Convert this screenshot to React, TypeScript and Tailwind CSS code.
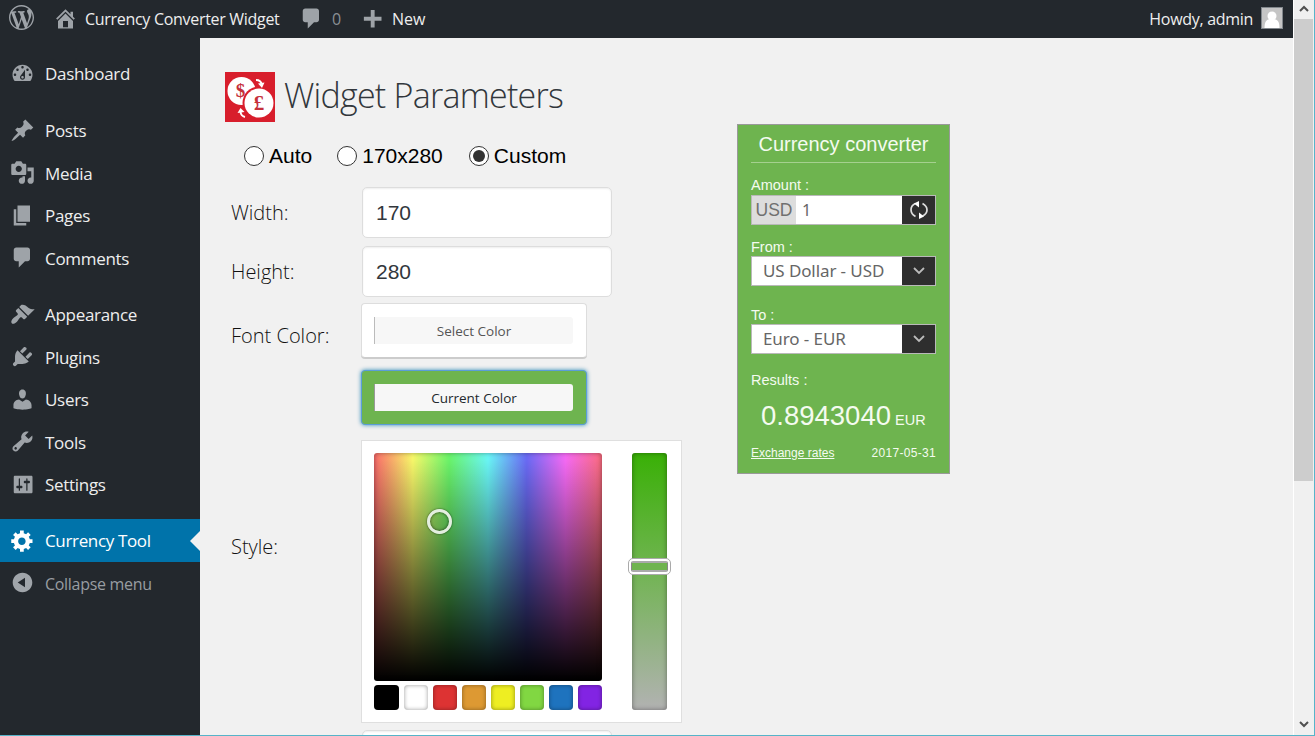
import React from "react";

const paths = {
  wordpress:
    "M20 10c0-5.51-4.49-10-10-10C4.48 0 0 4.49 0 10c0 5.52 4.48 10 10 10 5.51 0 10-4.48 10-10zM7.78 15.37L4.37 6.22c.55-.02 1.17-.08 1.17-.08.5-.06.44-1.13-.06-1.11 0 0-1.45.11-2.37.11-.18 0-.37 0-.58-.01C4.12 2.69 6.87 1.11 10 1.11c2.33 0 4.45.87 6.05 2.34-.68-.11-1.65.39-1.65 1.58 0 .74.45 1.36.9 2.1.35.61.55 1.36.55 2.46 0 1.49-1.4 5-1.4 5l-3.03-8.37c.54-.02.82-.17.82-.17.5-.05.44-1.25-.06-1.22 0 0-1.44.12-2.38.12-.87 0-2.33-.12-2.33-.12-.5-.03-.56 1.2-.06 1.22l.92.08 1.26 3.41zM17.41 10c.24-.64.74-1.87.43-4.25.7 1.29 1.05 2.71 1.05 4.25 0 3.29-1.73 6.24-4.4 7.78.97-2.59 1.94-5.2 2.92-7.78zM6.1 18.09C3.12 16.65 1.11 13.53 1.11 10c0-1.3.23-2.48.72-3.59C3.25 10.3 4.67 14.2 6.1 18.09zm4.03-6.63l2.58 6.98c-.86.29-1.76.45-2.71.45-.79 0-1.57-.11-2.29-.33.81-2.38 1.62-4.74 2.42-7.1z",
  home: "M16 8.5l1.53 1.53-1.06 1.06L10 4.6l-6.47 6.49-1.06-1.06L10 2.5l4 4v-2h2v4zm-6-2.46l6 5.99V18H4v-5.97zM12 17v-5H8v5h4z",
  plus: "M17.200 8.600v3.100h-5.500v5.500H8.600v-5.500H3.100V8.600h5.500V3.100h3.100v5.500z",
  dashboard:
    "M3.76 16h12.48c1.1-1.37 1.76-3.11 1.76-5 0-4.42-3.58-8-8-8s-8 3.58-8 8c0 1.89.66 3.63 1.76 5zM10 4c.55 0 1 .45 1 1s-.45 1-1 1-1-.45-1-1 .45-1 1-1zM6 6c.55 0 1 .45 1 1s-.45 1-1 1-1-.45-1-1 .45-1 1-1zm8 0c.55 0 1 .45 1 1s-.45 1-1 1-1-.45-1-1 .45-1 1-1zm-5.37 5.55L12 7v6c0 1.1-.9 2-2 2s-2-.9-2-2c0-.57.24-1.08.63-1.45zM4 10c.55 0 1 .45 1 1s-.45 1-1 1-1-.45-1-1 .45-1 1-1zm12 0c.55 0 1 .45 1 1s-.45 1-1 1-1-.45-1-1 .45-1 1-1zm-5 3c0-.55-.45-1-1-1s-1 .45-1 1 .45 1 1 1 1-.45 1-1z",
  post: "M10.44 3.02l1.82-1.82 6.36 6.35-1.83 1.82c-1.05-.68-2.48-.57-3.41.36l-.75.75c-.92.93-1.04 2.35-.35 3.41l-1.83 1.82-2.41-2.41-2.8 2.79c-.42.42-3.38 2.71-3.8 2.29s1.86-3.39 2.28-3.81l2.79-2.79L4.1 9.36l1.83-1.82c1.05.69 2.48.57 3.4-.36l.75-.75c.93-.92 1.05-2.35.36-3.41z",
  media:
    "M13 11V4c0-.55-.45-1-1-1h-1.67L9 1H5L3.67 3H2c-.55 0-1 .45-1 1v7c0 .55.45 1 1 1h10c.55 0 1-.45 1-1zM7 4.500c1.380 0 2.500 1.120 2.500 2.500S8.380 9.500 7 9.500 4.500 8.380 4.500 7 5.620 4.500 7 4.500zM14 6h5v10.500c0 1.380-1.120 2.500-2.500 2.500S14 17.880 14 16.500s1.120-2.500 2.500-2.500c.17 0 .34.02.5.05V9h-3V6zm-4 8.050V13h2v3.500c0 1.380-1.120 2.500-2.500 2.500S7 17.880 7 16.500 8.120 14 9.500 14c.17 0 .34.02.5.05z",
  page: "M6 15V2h10v13H6zm-1 1h8v2H3V5h2v11z",
  comment: "M5 2h9c1.1 0 2 .9 2 2v7c0 1.1-.9 2-2 2h-2l-5 5v-5H5c-1.1 0-2-.9-2-2V4c0-1.1.9-2 2-2z",
  appearance:
    "M14.48 11.06L7.41 3.99l1.5-1.5c.5-.56 2.3-.47 3.51.32 1.21.8 1.43 1.28 2.91 2.1 1.18.64 2.45 1.26 4.45.85zm-.71.71L6.7 4.7 4.93 6.47c-.39.39-.39 1.02 0 1.41l1.06 1.06c.39.39.39 1.03 0 1.42-.6.6-1.43 1.11-2.21 1.69-.35.26-.7.53-1.01.84C1.43 14.23.4 16.08 1.4 17.07c.99 1 2.84-.03 4.18-1.36.31-.31.58-.66.85-1.02.57-.78 1.08-1.61 1.69-2.21.39-.39 1.02-.39 1.41 0l1.06 1.06c.39.39 1.02.39 1.41 0z",
  plugins:
    "M13.11 4.36L9.87 7.6 8 5.73l3.24-3.24c.35-.34 1.05-.2 1.56.32.52.51.66 1.21.31 1.55zm-8 1.77l.91-1.12 9.01 9.01-1.19.84c-.71.71-2.63 1.16-3.82 1.16H6.14L4.9 17.26c-.59.59-1.54.59-2.12 0-.59-.58-.59-1.53 0-2.12l1.24-1.24v-3.88c0-1.13.4-3.19 1.09-3.89zm7.26 3.97l3.24-3.24c.34-.35 1.04-.21 1.55.31.52.51.66 1.21.31 1.55l-3.24 3.25z",
  users:
    "M10 9.25c-2.27 0-2.73-3.44-2.73-3.44C7 4.02 7.82 2 9.97 2c2.16 0 2.98 2.02 2.71 3.81 0 0-.41 3.44-2.68 3.44zm0 2.57L12.72 10c2.39 0 4.52 2.33 4.52 4.53v2.49s-3.65 1.13-7.24 1.13c-3.65 0-7.24-1.13-7.24-1.13v-2.49c0-2.25 1.94-4.48 4.47-4.48z",
  tools:
    "M16.68 9.77c-1.34 1.34-3.3 1.67-4.95.99l-5.41 6.52c-.99.99-2.59.99-3.58 0s-.99-2.59 0-3.57l6.52-5.42c-.68-1.65-.35-3.61.99-4.95 1.28-1.28 3.12-1.62 4.72-1.06l-2.89 2.89 2.82 2.82 2.86-2.87c.53 1.58.18 3.39-1.08 4.65zM3.81 16.21c.4.39 1.04.39 1.43 0 .4-.4.4-1.04 0-1.43-.39-.4-1.03-.4-1.43 0-.39.39-.39 1.03 0 1.43z",
  settings:
    "M18 16V4c0-.55-.45-1-1-1H4c-.55 0-1 .45-1 1v12c0 .55.45 1 1 1h13c.55 0 1-.45 1-1zM8 11h1c.55 0 1 .45 1 1s-.45 1-1 1H8v1.500c0 .28-.22.5-.5.5s-.5-.22-.5-.5V13H6c-.55 0-1-.45-1-1s.45-1 1-1h1V5.500c0-.28.22-.5.5-.5s.5.22.5.5V11zm5-2h-1c-.55 0-1-.45-1-1s.45-1 1-1h1V5.500c0-.28.22-.5.5-.5s.5.22.5.5V7h1c.55 0 1 .45 1 1s-.45 1-1 1h-1v5.500c0 .28-.22.5-.5.5s-.5-.22-.5-.5V9z",
  generic:
    "M18 12h-2.180c-.17.7-.44 1.350-.81 1.930l1.540 1.540-2.100 2.100-1.540-1.540c-.58.36-1.230.63-1.910.79V19H8v-2.180c-.68-.16-1.330-.43-1.910-.79l-1.540 1.540-2.120-2.120 1.540-1.540c-.36-.58-.63-1.230-.79-1.910H1V9.030h2.170c.16-.7.44-1.350.8-1.940L2.430 5.550l2.100-2.100 1.540 1.540c.58-.37 1.240-.64 1.930-.81V2h3v2.180c.68.16 1.330.43 1.910.79l1.540-1.540 2.120 2.120-1.540 1.540c.36.59.64 1.240.8 1.940H18V12zm-8.500 1.500c1.660 0 3-1.340 3-3s-1.340-3-3-3-3 1.340-3 3 1.340 3 3 3z",
  collapse:
    "M10 2.16c4.33 0 7.84 3.51 7.84 7.84s-3.51 7.84-7.84 7.84S2.16 14.33 2.16 10 5.71 2.16 10 2.16zm2 11.72V6.12L6.18 9.97z",
};

function Dashicon({ name, className = "" }: { name: keyof typeof paths; className?: string }) {
  return (
    <svg viewBox="0 0 20 20" className={`h-[25px] w-[25px] shrink-0 ${className}`} fill="currentColor" fillRule="evenodd">
      <path d={paths[name]} />
    </svg>
  );
}

function MenuItem({ icon, label, className = "" }: { icon: keyof typeof paths; label: string; className?: string }) {
  return (
    <li className={`flex h-[42.5px] items-center pl-[10px] ${className}`}>
      <Dashicon name={icon} className="mb-[2px] text-[#9ea3a8]" />
      <span className="ml-[10px] text-[17px] leading-6 tracking-[-0.3px] whitespace-nowrap text-[#eee]">{label}</span>
    </li>
  );
}

function Logo() {
  return (
    <svg viewBox="0 0 50 50" className="h-[50px] w-[50px] shrink-0">
      <rect width="50" height="50" fill="#d81e2c" />
      <circle cx="16.500" cy="19" r="14" fill="#fff" />
      <circle cx="34" cy="31" r="16.500" fill="#d81e2c" />
      <circle cx="34" cy="31" r="14.500" fill="#fff" />
      <text x="15.500" y="25" textAnchor="middle" fontSize="19" fontWeight="700" fill="#c5303a" fontFamily="Liberation Serif, serif">$</text>
      <text x="34" y="38" textAnchor="middle" fontSize="21" fontWeight="700" fill="#c5303a" fontFamily="Liberation Serif, serif">£</text>
      <path d="M31 8q5 0 6 5" fill="none" stroke="#fff" strokeWidth="2" />
      <path d="M33 11.500l6.500-1-2.500 5.500z" fill="#fff" />
      <path d="M20 45q-4-1-4.500-5" fill="none" stroke="#fff" strokeWidth="2" />
      <path d="M12.500 41l3-5 4 4z" fill="#fff" />
    </svg>
  );
}

function Radio({ label, checked, className = "" }: { label: string; checked?: boolean; className?: string }) {
  return (
    <div className={`flex items-center ${className}`}>
      <span className="flex h-5 w-5 items-center justify-center rounded-full border border-[#333] bg-white">
        {checked && <span className="h-3 w-3 rounded-full bg-[#333]" />}
      </span>
      <span className="ml-[5px] font-['Liberation_Sans',sans-serif] text-[21px] leading-6 text-black">{label}</span>
    </div>
  );
}

function TextField({ value, className = "" }: { value: string; className?: string }) {
  return (
    <div className={`flex h-[51px] w-[250px] items-center rounded-[5px] border border-[#ddd] bg-white pl-[13px] font-['Liberation_Sans',sans-serif] text-[21px] font-normal text-[#32373c] shadow-[inset_0_1px_2px_rgba(0,0,0,0.07)] ${className}`}>
      {value}
    </div>
  );
}

const swatches = [
  "w-[25px] bg-black",
  "w-6 bg-white",
  "w-6 bg-[#dd3333]",
  "w-6 bg-[#dd9933]",
  "w-6 bg-[#eeee22]",
  "w-6 bg-[#81d742]",
  "w-6 bg-[#1e73be]",
  "w-6 bg-[#8224e3]",
];

function Picker() {
  return (
    <div className="ml-[161px] mt-[15px] flex h-[283px] w-[321px] border border-[#dfdfdf] bg-white pl-3 pt-3">
      <div className="w-[228px]">
        <div className="relative h-[228px] rounded-[3px] bg-[linear-gradient(to_bottom,rgba(0,0,0,0),#000),linear-gradient(to_right,#ff6d6d,#fdfd6c_17%,#6cf96c_33%,#6cfbfb_50%,#6c6cf9_67%,#fa6cf9_84%,#ff6d80)] shadow-[inset_0_0_5px_rgba(0,0,0,0.4)]">
          <span className="absolute left-[53px] top-[56px] h-[25px] w-[25px] rounded-full border-[3px] border-[#e4eee0] shadow-[0_0_2px_rgba(0,0,0,0.7),inset_0_0_3px_rgba(0,0,0,0.7)]" />
        </div>
        <div className="mt-1 flex justify-between">
          {swatches.map((c) => (
            <span key={c} className={`h-[25px] rounded-[4px] shadow-[inset_0_0_4px_rgba(0,0,0,0.4)] ${c}`} />
          ))}
        </div>
      </div>
      <div className="relative ml-[30px] h-[257px] w-[35px] rounded-[3px] bg-[linear-gradient(to_bottom,#39b006,#6fb44f_44%,#b2b2b2)] shadow-[inset_0_0_5px_rgba(0,0,0,0.4)]">
        <span className="absolute -left-1 top-[105px] h-[17px] w-[43px] rounded-[5px] border border-[#aaa] bg-white" />
        <span className="absolute -left-px top-[108px] h-[11px] w-[37px] rounded-[2px] border border-[#888] border-y-2 border-y-[#aaa] bg-[#6fb44f]" />
      </div>
    </div>
  );
}

function Chevron() {
  return (
    <span className="flex h-full w-[33px] items-center justify-center bg-[#2e2e2e]">
      <svg viewBox="0 0 12 8" className="h-2 w-3">
        <path d="M1 1l5 5 5-5" fill="none" stroke="#bbb" strokeWidth="1.800" />
      </svg>
    </span>
  );
}

function Select({ value }: { value: string }) {
  return (
    <div className="flex h-[30px] w-[185px] items-center justify-between border border-[#b9b9b9] bg-white">
      <span className="pl-[11px] font-['Noto_Sans',sans-serif] text-[17px] leading-5 tracking-[-0.1px] whitespace-nowrap text-[#666]">{value}</span>
      <Chevron />
    </div>
  );
}

function Converter() {
  return (
    <section className="mt-[86px] ml-[125px] flex h-[350px] w-[213px] shrink-0 flex-col border border-[#999] bg-[#6eb44f] px-[13px] font-['Liberation_Sans',sans-serif] text-[#f4fbf0]">
      <h2 className="mt-px h-[37px] border-b border-[#a5d08f] text-center text-[20px] leading-9">Currency converter</h2>
      <div className="mt-[13px] text-[14.500px] leading-[19px]">Amount :</div>
      <div className="flex h-[30px] w-[185px] items-center border border-[#b9b9b9] bg-white">
        <span className="flex h-full w-11 items-center justify-center bg-[#ddd] text-[17.500px] text-[#707070]">USD</span>
        <span className="flex-1 pl-[6px] font-['Noto_Sans',sans-serif] text-[16px] text-[#666]">1</span>
        <span className="flex h-full w-[33px] items-center justify-center bg-[#2e2e2e]">
          <svg viewBox="0 0 20 20" className="mb-px h-5 w-5">
            <path d="M6.500 16.500C.5 13 .5 6 6.500 3.500M13.500 3.500c6 3.500 6 9.500 0 12.500" fill="none" stroke="#ddd" strokeWidth="1.700" />
            <path d="M5 3.500L10 1v6.500zM15 16.500L10 19v-6.500z" fill="#fff" />
          </svg>
        </span>
      </div>
      <div className="mt-[13px] text-[14.500px] leading-[18px]">From :</div>
      <Select value="US Dollar - USD" />
      <div className="mt-[20px] text-[14.500px] leading-[18px]">To :</div>
      <Select value="Euro - EUR" />
      <div className="mt-[17px] text-[14.500px] leading-[18px]">Results :</div>
      <div className="mt-[11px] flex items-baseline pl-[10px] leading-8">
        <span className="text-[27.500px]">0.8943040</span>
        <span className="ml-[4px] text-[14.500px]">EUR</span>
      </div>
      <div className="mt-[9px] flex w-[185px] justify-between text-[12px] leading-4">
        <span className="underline underline-offset-1">Exchange rates</span>
        <span className="tracking-[0.3px]">2017-05-31</span>
      </div>
    </section>
  );
}

export default function App() {
  return (
    <div className="flex h-[736px] w-[1315px] flex-col overflow-hidden border-r border-b border-[#56b4c9] bg-[#f1f1f1] font-['Open_Sans','Noto_Sans',sans-serif]">
      <div className="flex min-h-0 flex-1">
        <div className="flex w-[1293px] shrink-0 flex-col">
          <header className="flex h-[38px] shrink-0 items-center bg-[#23282d] pl-[9px] pr-[10px] text-[16px] tracking-[-0.3px] text-[#eee]">
            <Dashicon name="wordpress" className="mb-[3px] text-[#9ea3a8]" />
            <Dashicon name="home" className="ml-[19px] mb-[2px] text-[#9ea3a8]" />
            <span className="ml-[7px] w-[196px] whitespace-nowrap">Currency Converter Widget</span>
            <Dashicon name="comment" className="ml-[18px] mb-[2px] text-[#9ea3a8]" />
            <span className="ml-[8px] w-[28px] text-[#8a8f94]">0</span>
            <Dashicon name="plus" className="mb-px text-[#9ea3a8]" />
            <span className="ml-[7px] tracking-normal">New</span>
            <span className="ml-auto">Howdy, admin</span>
            <svg viewBox="0 0 22 22" className="ml-2 mb-[2px] h-[22px] w-[22px]">
              <rect x=".5" y=".5" width="21" height="21" fill="#c5c5c5" stroke="#82878c" />
              <circle cx="11" cy="9" r="4.500" fill="#fff" />
              <path d="M3.500 21c0-9 4-9 7.500-9s7.500 0 7.500 9z" fill="#fff" />
            </svg>
          </header>
          <div className="flex min-h-0 flex-1">
            <nav className="w-[200px] shrink-0 bg-[#23282d] pt-[15px]">
              <ul>
                <MenuItem icon="dashboard" label="Dashboard" />
                <MenuItem icon="post" label="Posts" className="mt-[14.500px]" />
                <MenuItem icon="media" label="Media" />
                <MenuItem icon="page" label="Pages" />
                <MenuItem icon="comment" label="Comments" />
                <MenuItem icon="appearance" label="Appearance" className="mt-[14px]" />
                <MenuItem icon="plugins" label="Plugins" />
                <MenuItem icon="users" label="Users" />
                <MenuItem icon="tools" label="Tools" />
                <MenuItem icon="settings" label="Settings" />
                <li className="mt-[12.500px] flex h-[43px] items-center bg-[#0073aa] pl-[10px] text-white">
                  <Dashicon name="generic" />
                  <span className="ml-[10px] pt-px text-[17px] tracking-[-0.35px]">Currency Tool</span>
                  <span className="ml-auto h-0 w-0 border-y-[10px] border-r-[10px] border-y-transparent border-r-[#f1f1f1]" />
                </li>
                <li className="flex h-[43px] items-center pl-[10px] text-[#a0a5aa]">
                  <Dashicon name="collapse" className="mb-[3px]" />
                  <span className="ml-[10px] pt-px text-[16px] tracking-[-0.3px] text-[#989da1]">Collapse menu</span>
                </li>
              </ul>
            </nav>
            <main className="flex min-w-0 flex-1 items-start">
              <div className="w-[412px] shrink-0">
                <h1 className="mt-[34px] flex h-[50px] items-center pl-[25px] text-[34px] font-light text-[#32373c]">
                  <Logo />
                  <span className="mb-[3px] ml-[9px] tracking-[-0.75px] whitespace-nowrap">Widget Parameters</span>
                </h1>
                <div className="mt-[22px] flex h-6 items-center pl-[44px]">
                  <Radio label="Auto" />
                  <Radio label="170x280" className="ml-[25px]" />
                  <Radio label="Custom" checked className="ml-[26px]" />
                </div>
                <div className="mt-[19px] flex items-center pl-[31px] text-[20px] font-light text-[#111]">
                  <span className="w-[131px] pt-px">Width:</span>
                  <TextField value="170" />
                </div>
                <div className="mt-[8px] flex items-center pl-[31px] text-[20px] font-light text-[#111]">
                  <span className="w-[131px] pt-px">Height:</span>
                  <TextField value="280" />
                </div>
                <div className="mt-[6px] flex items-start pl-[31px] text-[20px] font-light text-[#111]">
                  <span className="w-[130px] pt-[18px]">Font Color:</span>
                  <div className="h-[55px] w-[226px] rounded-[4px] border border-[#ddd] border-b-[#ccc] bg-white pt-[13px] pl-3 shadow-[0_1px_0_#ccc]">
                    <div className="h-[27px] w-[199px] rounded-r-[3px] border-l border-[#bbb] bg-[#f7f7f7] text-center text-[13.500px] leading-[28px] font-normal text-[#555]">Select Color</div>
                  </div>
                </div>
                <div className="ml-[161px] mt-[12px] h-[55px] w-[226px] rounded-[4px] border border-[#5b9dd9] bg-[#6eb44f] pt-[13px] pl-3 shadow-[0_0_4px_rgba(0,115,170,0.8)]">
                  <div className="h-[27px] w-[199px] rounded-r-[3px] border-l border-[#999] bg-[#f7f7f7] text-center text-[13.500px] leading-[28px] text-[#23282d]">Current Color</div>
                </div>
                <div className="relative">
                  <span className="absolute left-[31px] top-[92px] text-[20px] font-light text-[#111]">Style:</span>
                  <Picker />
                </div>
                <TextField value="" className="ml-[162px] mt-[7px]" />
              </div>
              <Converter />
            </main>
          </div>
        </div>
        <div className="flex flex-1 flex-col items-center border-l border-white bg-[#f0f0f0] pr-px">
          <svg viewBox="0 0 10 6" className="mt-[5px] h-[7px] w-[10px]">
            <path d="M1 5.500l4-4 4 4" fill="none" stroke="#505050" strokeWidth="2" />
          </svg>
          <div className="mt-[7px] h-[462px] w-full bg-[#cdcdcd]" />
          <svg viewBox="0 0 10 6" className="mt-auto mb-[7px] h-[7px] w-[10px]">
            <path d="M1 .5l4 4 4-4" fill="none" stroke="#505050" strokeWidth="2" />
          </svg>
        </div>
      </div>
    </div>
  );
}
